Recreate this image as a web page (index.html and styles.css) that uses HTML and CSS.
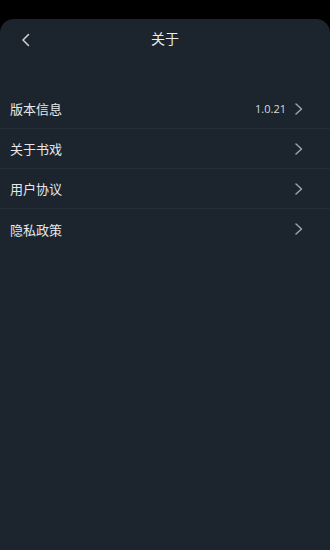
FILE: index.html
```html
<!DOCTYPE html>
<html lang="zh">
<head>
<meta charset="utf-8">
<link rel="stylesheet" href="styles.css">
</head>
<body>
<div class="screen">
  <div class="card">
    <div class="header">
      <svg class="back" width="12" height="14" viewBox="0 0 12 14"><path d="M8.5 1.5 L3 7 L8.5 12.5" fill="none" stroke="#c9cdd1" stroke-width="1.6" stroke-linecap="round" stroke-linejoin="round"/></svg>
      <div class="title">关于</div>
    </div>
    <div class="list">
      <div class="row"><span class="label">版本信息</span><span class="right"><span class="value">1.0.21</span><svg class="chev" width="10" height="14" viewBox="0 0 10 14"><path d="M2 2 L7.5 7 L2 12" fill="none" stroke="#9ca2a8" stroke-width="1.5" stroke-linecap="round" stroke-linejoin="round"/></svg></span></div>
      <div class="row"><span class="label">关于书戏</span><span class="right"><svg class="chev" width="10" height="14" viewBox="0 0 10 14"><path d="M2 2 L7.5 7 L2 12" fill="none" stroke="#9ca2a8" stroke-width="1.5" stroke-linecap="round" stroke-linejoin="round"/></svg></span></div>
      <div class="row"><span class="label">用户协议</span><span class="right"><svg class="chev" width="10" height="14" viewBox="0 0 10 14"><path d="M2 2 L7.5 7 L2 12" fill="none" stroke="#9ca2a8" stroke-width="1.5" stroke-linecap="round" stroke-linejoin="round"/></svg></span></div>
      <div class="row last"><span class="label">隐私政策</span><span class="right"><svg class="chev" width="10" height="14" viewBox="0 0 10 14"><path d="M2 2 L7.5 7 L2 12" fill="none" stroke="#9ca2a8" stroke-width="1.5" stroke-linecap="round" stroke-linejoin="round"/></svg></span></div>
    </div>
  </div>
</div>
</body>
</html>
```
FILE: styles.css
```css
html, body {
  margin: 0;
  padding: 0;
  background: #000;
  width: 330px;
  height: 550px;
  overflow: hidden;
  font-family: "Noto Sans CJK SC", "Noto Sans", sans-serif;
}
.screen {
  padding-top: 19px;
  height: 550px;
  box-sizing: border-box;
}
.card {
  background: #1c252e;
  border-radius: 14px 14px 0 0;
  height: 531px;
}
.header {
  height: 42px;
  display: flex;
  align-items: center;
  justify-content: center;
  position: relative;
}
.back {
  position: absolute;
  left: 20px;
  top: 14px;
}
.title {
  color: #e8eaec;
  font-size: 14px;
  margin-top: -4px;
}
.list {
  margin-top: 28px;
}
.row {
  height: 40px;
  display: flex;
  align-items: center;
  justify-content: space-between;
  padding: 0 26px 0 10px;
  border-bottom: 1px solid #252e37;
  box-sizing: border-box;
}
.row.last {
  border-bottom: none;
}
.label {
  color: #e6e8ea;
  font-size: 13px;
}
.right {
  display: flex;
  align-items: center;
  gap: 8px;
}
.value {
  color: #d8dadc;
  font-size: 11px;
  font-family: "Open Sans", "Noto Sans", sans-serif;
}
.chev {
  display: block;
}
```
